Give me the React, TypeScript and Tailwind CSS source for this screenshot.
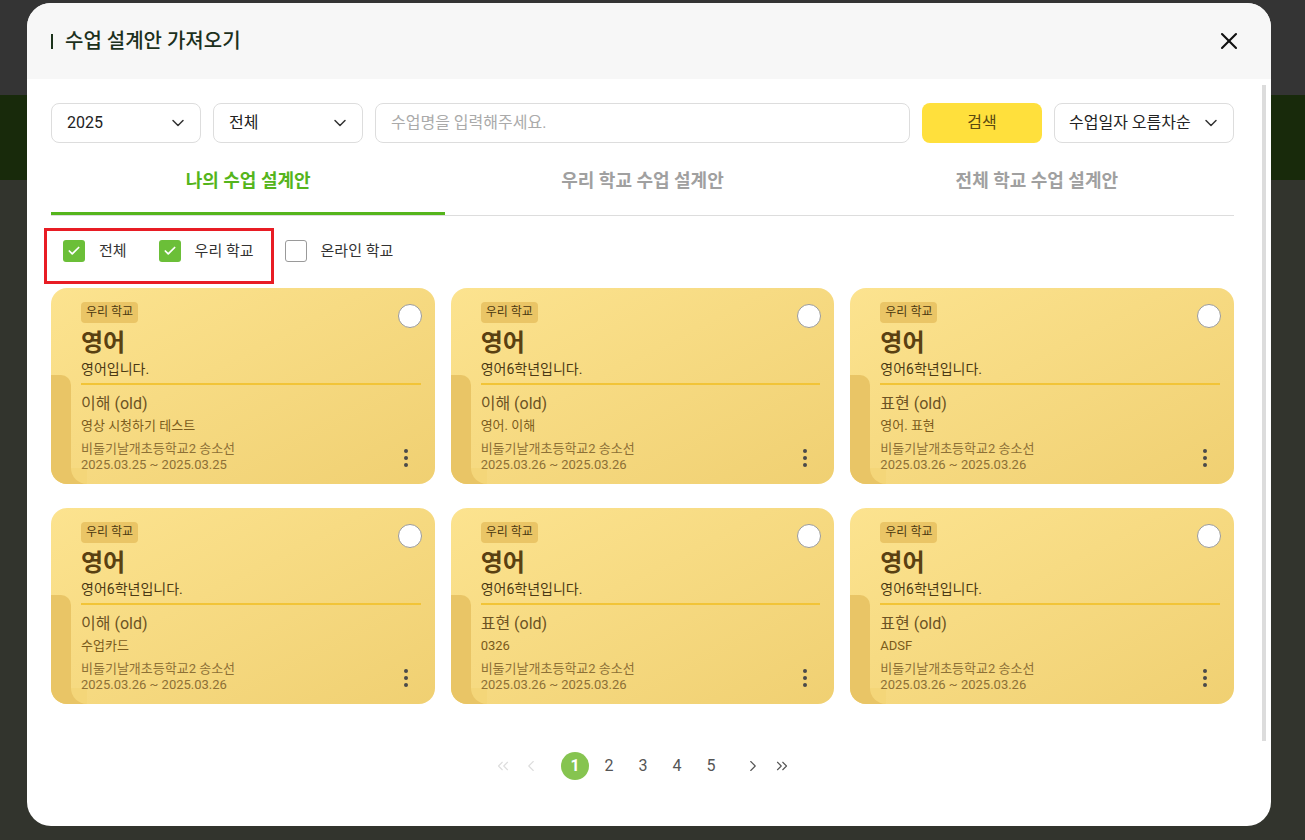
import React from "react";
import { Check, ChevronDown, ChevronLeft, ChevronRight, ChevronsLeft, ChevronsRight, X } from "lucide-react";

type Plan = {
  id: number;
  desc: string;
  area: string;
  detail: string;
  date: string;
};

const plans: Plan[] = [
  { id: 1, desc: "영어입니다.", area: "이해 (old)", detail: "영상 시청하기 테스트", date: "2025.03.25 ~ 2025.03.25" },
  { id: 2, desc: "영어6학년입니다.", area: "이해 (old)", detail: "영어. 이해", date: "2025.03.26 ~ 2025.03.26" },
  { id: 3, desc: "영어6학년입니다.", area: "표현 (old)", detail: "영어. 표현", date: "2025.03.26 ~ 2025.03.26" },
  { id: 4, desc: "영어6학년입니다.", area: "이해 (old)", detail: "수업카드", date: "2025.03.26 ~ 2025.03.26" },
  { id: 5, desc: "영어6학년입니다.", area: "표현 (old)", detail: "0326", date: "2025.03.26 ~ 2025.03.26" },
  { id: 6, desc: "영어6학년입니다.", area: "표현 (old)", detail: "ADSF", date: "2025.03.26 ~ 2025.03.26" },
];

function SelectBox( { label, width }: { label: string, width: string } ) {

  return (
    <div className={`${width} h-10 shrink-0 flex items-center justify-between pl-[15px] pr-[12px] border border-[#dddddd] rounded-lg bg-white text-[16px] text-[#222]`}>
      <span>{ label }</span>
      <ChevronDown size={20} strokeWidth={1.8} className="text-[#333]" />
    </div>
  );

}

function CheckItem( { label, checked }: { label: string, checked: boolean } ) {

  return (
    <div className="flex items-center">
      {
        checked ? (
          <div className="w-[22px] h-[22px] rounded-[3px] bg-[#6bbf38] flex items-center justify-center">
            <Check size={14} strokeWidth={3} className="text-white" />
          </div>
        ) : (
          <div className="w-[22px] h-[22px] rounded-[3px] border border-[#9a9a9a] bg-white" />
        )
      }
      <span className="ml-[14px] text-[15px] text-[#333]">{ label }</span>
    </div>
  );

}

function PlanCard( { plan }: { plan: Plan } ) {

  return (
    <div className="relative h-[196px] rounded-[16px] overflow-hidden bg-gradient-to-br from-[#fce38f] to-[#f0d072]">

      {/* folded page */}
      <div className="absolute left-0 top-[87px] bottom-0 w-[20px] bg-[#e9c566] rounded-tr-[10px]" />
      <div className="absolute left-[20px] bottom-0 w-[16px] h-[16px] bg-[#e9c566]">
        <div className="w-full h-full rounded-bl-[16px] bg-[#f4d679]" />
      </div>

      {/* select radio */}
      <div className="absolute top-[16px] right-[13px] w-[24px] h-[24px] rounded-full bg-white border border-[#9a9a9a]" />

      {/* kebab */}
      <div className="absolute right-[27px] top-[161px] flex flex-col gap-[3px]">
        <span className="w-[4px] h-[4px] rounded-full bg-[#4a4a4a]" />
        <span className="w-[4px] h-[4px] rounded-full bg-[#4a4a4a]" />
        <span className="w-[4px] h-[4px] rounded-full bg-[#4a4a4a]" />
      </div>

      <div className="relative pl-[30px] pr-[14px] pt-[14px]">

        <div className="w-fit h-[21px] leading-[21px] px-[5px] rounded-[4px] bg-[#eac566] text-[12px] text-[#4a3810]">우리 학교</div>

        <div className="mt-[5px] h-[30px] leading-[30px] text-[24px] font-bold text-[#5a4112]">영어</div>

        <div className="mt-[1px] h-[20px] leading-[20px] text-[14px] text-[#4a3914]">{ plan.desc }</div>

        <div className="mt-[4px] h-[2px] bg-[#f2c437]" />

        <div className="mt-[8px] h-[22px] leading-[22px] text-[16px] text-[#6c5324]">{ plan.area }</div>

        <div className="mt-[2px] h-[18px] leading-[18px] text-[13px] text-[#7b5b1c]">{ plan.detail }</div>

        <div className="mt-[6px] leading-[16px] text-[13px] text-[#8d7036]">
          <div>비둘기날개초등학교2 송소선</div>
          <div>{ plan.date }</div>
        </div>

      </div>

    </div>
  );

}

export default function App() {

  const pages = [ 1, 2, 3, 4, 5 ];

  return (

    <div className="relative h-[840px] w-full overflow-hidden flex flex-col font-['Roboto','Noto_Sans_CJK_KR',sans-serif]">

      {/* dimmed page behind */}
      <div className="h-[95px] bg-[#343434]" />
      <div className="h-[85px] bg-[#182a0b]" />
      <div className="flex-1 bg-[#32342d]" />

      {/* Modal */}
      <div className="absolute left-[27px] top-[3px] w-[1244px] h-[823px] rounded-[24px] bg-white overflow-hidden">

        <div className="h-[76px] bg-[#f7f7f7] flex items-center justify-between pl-[24px] pr-[28px]">
          <div className="flex items-center">
            <span className="w-[2px] h-[15px] bg-[#1c331c]" />
            <h1 className="ml-[12px] text-[20px] font-medium text-[#1c301c]">수업 설계안 가져오기</h1>
          </div>
          <X size={28} strokeWidth={1.8} className="text-[#111]" />
        </div>

        {/* scrollbar */}
        <div className="absolute right-[5px] top-[82px] w-[4px] h-[656px] bg-[#dcdcdc]" />

        <div className="pl-[24px] pr-[37px] pt-[24px]">

          {/* Filters */}
          <div className="flex gap-3">
            <SelectBox label="2025" width="w-[150px]" />
            <SelectBox label="전체" width="w-[150px]" />
            <div className="flex-1 h-10 flex items-center px-[15px] border border-[#dddddd] rounded-lg text-[16px] text-[#aaaaaa]">수업명을 입력해주세요.</div>
            <div className="w-[120px] h-10 shrink-0 flex items-center justify-center rounded-lg bg-[#ffe03c] text-[16px] text-[#5a4a10]">검색</div>
            <div className="w-[180px] h-10 shrink-0 flex items-center justify-between pl-[14px] pr-[12px] border border-[#dddddd] rounded-lg text-[16px] text-[#222]">
              <span>수업일자 오름차순</span>
              <ChevronDown size={20} strokeWidth={1.8} className="text-[#333]" />
            </div>
          </div>

          {/* Tabs */}
          <div className="mt-[17px] grid grid-cols-3 border-b border-[#dddddd]">
            <div className="h-[55px] pt-[8px] leading-[26px] text-center text-[18px] font-bold text-[#55b51c] border-b-[3px] border-[#55b51c] -mb-px">나의 수업 설계안</div>
            <div className="h-[55px] pt-[8px] leading-[26px] text-center text-[18px] font-bold text-[#a0a0a0]">우리 학교 수업 설계안</div>
            <div className="h-[55px] pt-[8px] leading-[26px] text-center text-[18px] font-bold text-[#a0a0a0]">전체 학교 수업 설계안</div>
          </div>

          {/* Check filters */}
          <div className="relative mt-[12px] h-[56px] flex items-start pt-[12px] pl-[12px]">
            <CheckItem label="전체" checked={true} />
            <div className="ml-[32px]"><CheckItem label="우리 학교" checked={true} /></div>
            <div className="ml-[31px]"><CheckItem label="온라인 학교" checked={false} /></div>
            <div className="absolute left-[-7px] top-0 w-[230px] h-[56px] border-[3px] border-[#e81c24]" />
          </div>

          {/* Cards */}
          <div className="mt-[4px] grid grid-cols-3 gap-x-4 gap-y-6">
            {
              plans.map( ( plan ) => (
                <PlanCard key={plan.id} plan={plan} />
              ) )
            }
          </div>

          {/* Pagination */}
          <div className="mt-[48px] flex items-center justify-center text-[16px]">
            <div className="w-[28px] h-[28px] flex items-center justify-center text-[#dddddd]"><ChevronsLeft size={18} strokeWidth={1.5} /></div>
            <div className="w-[28px] h-[28px] flex items-center justify-center text-[#dddddd]"><ChevronLeft size={18} strokeWidth={1.5} /></div>
            <div className="ml-[16px] flex gap-[6px]">
              {
                pages.map( ( page ) => (
                  <div key={page} className={page === 1 ? "w-[28px] h-[28px] rounded-full bg-[#86c450] text-white font-bold flex items-center justify-center" : "w-[28px] h-[28px] flex items-center justify-center text-[#555]"}>{ page }</div>
                ) )
              }
            </div>
            <div className="ml-[14px] w-[28px] h-[28px] flex items-center justify-center text-[#555]"><ChevronRight size={18} strokeWidth={1.5} /></div>
            <div className="ml-px w-[28px] h-[28px] flex items-center justify-center text-[#555]"><ChevronsRight size={18} strokeWidth={1.5} /></div>
          </div>

        </div>

      </div>

    </div>

  );

}
